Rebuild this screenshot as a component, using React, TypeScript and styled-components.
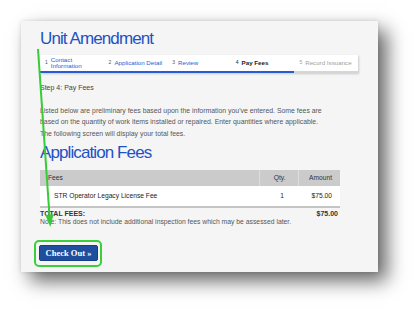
import React from 'react';
import styled, { createGlobalStyle } from 'styled-components';

const GlobalStyle = createGlobalStyle`
	body {
		margin: 0;
		background: #fff;
		font-family: 'Liberation Sans', Arial, sans-serif;
	}
`;

type StepState = 'done' | 'active' | 'todo';

const steps: { n: number; label: React.ReactNode; state: StepState }[] = [
	{ n: 1, label: <>Contact<br />Information</>, state: 'done' },
	{ n: 2, label: 'Application Detail', state: 'done' },
	{ n: 3, label: 'Review', state: 'done' },
	{ n: 4, label: 'Pay Fees', state: 'active' },
	{ n: 5, label: 'Record Issuance', state: 'todo' },
];

const App: React.FC = () => {
	return (
		<SPage>
			<GlobalStyle />
			<div className='panel'>
				<h1 className='title'>Unit Amendment</h1>
				<StepBar>
					{steps.map(step => (
						<Step key={step.n} $state={step.state}>
							<span className='num'>{step.n}</span>
							<span className='label'>{step.label}</span>
						</Step>
					))}
				</StepBar>
				<p className='step-name'>Step 4: Pay Fees</p>
				<p className='intro'>
					Listed below are preliminary fees based upon the information you've entered. Some fees are
					based on the quantity of work items installed or repaired. Enter quantities where applicable.
					<br />
					The following screen will display your total fees.
				</p>
				<h2 className='title sub'>Application Fees</h2>
				<FeeTable>
					<thead>
						<tr>
							<th className='fees'>Fees</th>
							<th className='qty'>Qty.</th>
							<th className='amount'>Amount</th>
						</tr>
					</thead>
					<tbody>
						<tr>
							<td className='fees'>STR Operator Legacy License Fee</td>
							<td className='qty'>1</td>
							<td className='amount'>$75.00</td>
						</tr>
					</tbody>
				</FeeTable>
				<div className='total'>
					<span>TOTAL FEES:</span>
					<span>$75.00</span>
				</div>
				<p className='note'>Note: This does not include additional inspection fees which may be assessed later.</p>
				<div className='highlight'>
					<button className='btn-checkout' type='button'>
						Check Out »
					</button>
				</div>
			</div>
			{/* green annotation arrow drawn over the screenshot */}
			<svg className='arrow' width='420' height='314' viewBox='0 0 420 314'>
				<line x1='38' y1='49' x2='49.5' y2='216' stroke='#36cc36' strokeWidth='2' />
				<polygon points='50.3,227 53.6,214.6 45.4,215.2' fill='#36cc36' />
			</svg>
		</SPage>
	);
};

export default App;

const StepBar = styled.div`
	display: grid;
	grid-template-columns: repeat(5, 1fr);
	width: 318px;
	height: 18px;
	margin-top: 7px;
	background: #fff;
	box-shadow: 1px 1px 2px rgba(0, 0, 0, 0.18);
`;

const Step = styled.div<{ $state: StepState }>`
	display: flex;
	align-items: center;
	gap: 3px;
	padding-left: 5px;
	border-bottom: 2px solid ${p => (p.$state === 'todo' ? '#d6d6d6' : '#2a5bd7')};
	font-size: 6.2px;
	line-height: 6px;
	color: ${p => (p.$state === 'done' ? '#2a5bd7' : p.$state === 'active' ? '#222' : '#a0a0a0')};
	font-weight: ${p => (p.$state === 'active' ? 700 : 400)};

	.num {
		font-size: 5px;
		font-weight: 400;
		color: ${p => (p.$state === 'todo' ? '#a0a0a0' : p.$state === 'active' ? '#222' : '#555')};
		align-self: center;
		margin-top: -2px;
	}
`;

const FeeTable = styled.table`
	width: 300px;
	margin-top: 8px;
	border-collapse: collapse;
	font-size: 6.7px;

	th {
		height: 16px;
		padding: 0;
		background: #cbcbcb;
		color: #333;
		font-weight: 400;
		text-align: left;
	}
	th + th {
		border-left: 1px solid #dedede;
	}
	td {
		height: 20px;
		padding: 0;
		background: #fff;
		color: #222;
		border-bottom: 2px solid #c4c4c4;
	}
	.fees {
		padding-left: 8px;
	}
	td.fees {
		padding-left: 14px;
	}
	.qty {
		width: 39px;
		text-align: right;
		padding-right: 12px;
		box-sizing: border-box;
	}
	td.qty {
		padding-right: 14px;
	}
	.amount {
		width: 42px;
		text-align: right;
		padding-right: 8px;
		box-sizing: border-box;
	}
`;

const SPage = styled.div`
	position: relative;
	width: 420px;
	height: 314px;
	padding: 21px 0 0 21px;
	box-sizing: border-box;
	overflow: hidden;

	.panel {
		width: 357px;
		height: 251px;
		box-sizing: border-box;
		padding: 9px 19px 0;
		background: #f5f5f5;
		box-shadow: 9px 9px 18px rgba(0, 0, 0, 0.6), 0 0 4px rgba(0, 0, 0, 0.12);
	}

	.title {
		margin: 0;
		font-size: 17px;
		line-height: 18px;
		font-weight: 400;
		letter-spacing: -0.9px;
		color: #1d52c6;
	}
	.sub {
		margin-top: 5px;
	}

	.step-name {
		margin: 10px 0 0;
		font-size: 7px;
		line-height: 10px;
		color: #444;
	}

	.intro {
		width: 300px;
		margin: 12px 0 0;
		font-size: 6.9px;
		line-height: 11.3px;
		color: #555;
	}

	.total {
		display: flex;
		justify-content: space-between;
		width: 300px;
		margin-top: 2px;
		padding-right: 2px;
		box-sizing: border-box;
		font-size: 7px;
		line-height: 8px;
		font-weight: 700;
		color: #333;
	}

	.note {
		margin: 0;
		font-size: 6.8px;
		line-height: 8px;
		color: #555;
	}

	.highlight {
		display: inline-block;
		margin-top: 14px;
		margin-left: -6px;
		padding: 3px 2px 4px 3px;
		border: 2px solid #3ccf3c;
		border-radius: 5px;
	}

	.btn-checkout {
		display: block;
		width: 59px;
		height: 16px;
		padding: 0;
		background: #1f4e9e;
		border: 1px solid #173f85;
		border-radius: 2px;
		color: #fff;
		font-family: 'Liberation Serif', 'Times New Roman', serif;
		font-size: 8.5px;
		font-weight: 700;
	}

	.arrow {
		position: absolute;
		top: 0;
		left: 0;
		pointer-events: none;
	}
`;
